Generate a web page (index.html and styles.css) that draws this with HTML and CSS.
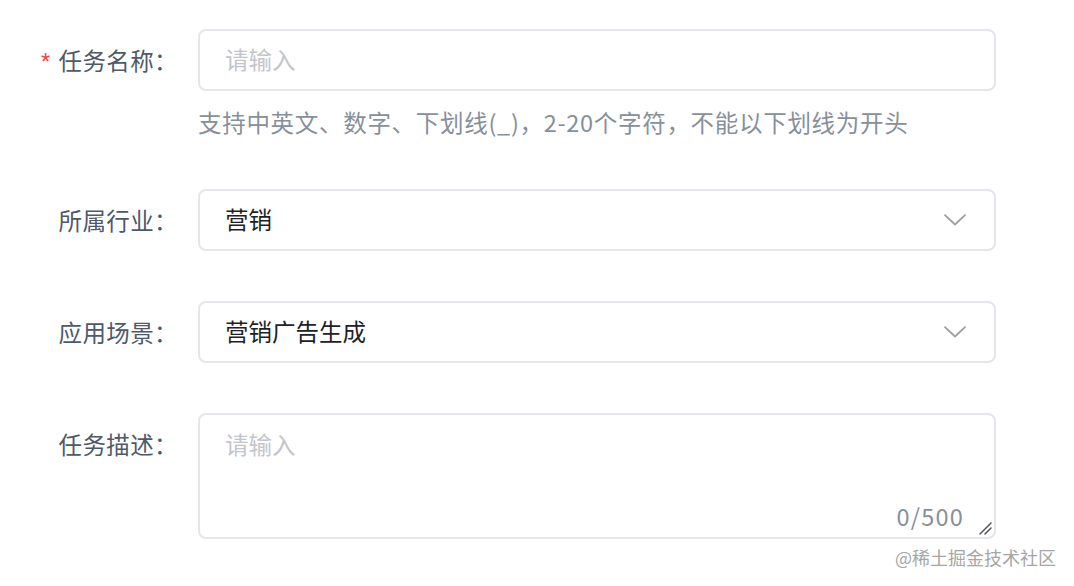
FILE: index.html
```html
<!DOCTYPE html>
<html lang="zh-CN">
<head>
<meta charset="utf-8">
<title>任务表单</title>
<link rel="stylesheet" href="styles.css">
</head>
<body>
<form class="form">
  <div class="item">
    <label class="label"><span class="req">*</span>任务名称：</label>
    <div class="control">
      <div class="input"><span class="placeholder">请输入</span></div>
      <div class="help">支持中英文、数字、下划线(_)，2-20个字符，不能以下划线为开头</div>
    </div>
  </div>
  <div class="item">
    <label class="label">所属行业：</label>
    <div class="control">
      <div class="input select"><span class="value">营销</span>
        <svg class="arrow" width="22" height="12" viewBox="0 0 22 12"><path d="M1 1.2 L11 10.5 L21 1.2" fill="none" stroke="#9a9ea6" stroke-width="1.8" stroke-linecap="round" stroke-linejoin="round"/></svg>
      </div>
    </div>
  </div>
  <div class="item">
    <label class="label">应用场景：</label>
    <div class="control">
      <div class="input select"><span class="value">营销广告生成</span>
        <svg class="arrow" width="22" height="12" viewBox="0 0 22 12"><path d="M1 1.2 L11 10.5 L21 1.2" fill="none" stroke="#9a9ea6" stroke-width="1.8" stroke-linecap="round" stroke-linejoin="round"/></svg>
      </div>
    </div>
  </div>
  <div class="item">
    <label class="label">任务描述：</label>
    <div class="control">
      <div class="textarea">
        <span class="placeholder">请输入</span>
        <span class="counter">0/500</span>
        <svg class="resize" width="14" height="14" viewBox="0 0 14 14"><path d="M2 13 L13 2 M7 13 L13 7" stroke="#555" stroke-width="1.5" stroke-linecap="round"/></svg>
      </div>
    </div>
  </div>
</form>
<div class="watermark">@稀土掘金技术社区</div>
</body>
</html>
```
FILE: styles.css
```css
html, body {
  margin: 0;
  padding: 0;
  background: #ffffff;
}
body {
  font-family: "Noto Sans CJK SC", "Noto Sans", sans-serif;
  font-size: 23.5px;
  width: 1074px;
  height: 586px;
  overflow: hidden;
  position: relative;
}
.form {
  padding-top: 29px;
  display: flex;
  flex-direction: column;
  gap: 50px;
  width: 996px;
}
.item {
  display: flex;
  align-items: flex-start;
}
.label {
  flex: 0 0 198px;
  box-sizing: border-box;
  padding-right: 20px;
  text-align: right;
  line-height: 62px;
  height: 62px;
  color: #4e5969;
  white-space: nowrap;
  letter-spacing: 0.4px;
}
.req {
  color: #f53f3f;
  margin-right: 8px;
  font-family: "Liberation Sans", sans-serif;
}
.control {
  flex: 1;
  display: flex;
  flex-direction: column;
}
.input {
  box-sizing: border-box;
  height: 62px;
  border: 2px solid #e5e6eb;
  border-radius: 8px;
  padding: 0 25px;
  display: flex;
  align-items: center;
  line-height: 1;
}
.select {
  justify-content: space-between;
  padding-right: 28px;
}
.placeholder {
  color: #c2c5cb;
}
.value {
  color: #1d2129;
}
.arrow {
  display: block;
}
.help {
  margin-top: 14px;
  line-height: 34px;
  color: #86909c;
  white-space: nowrap;
  letter-spacing: 0.7px;
}
.textarea {
  box-sizing: border-box;
  height: 126px;
  border: 2px solid #e5e6eb;
  border-radius: 8px;
  padding: 12px 25px;
  position: relative;
  line-height: 34px;
}
.counter {
  position: absolute;
  right: 30px;
  bottom: 4px;
  color: #86909c;
  line-height: 34px;
  letter-spacing: 1.2px;
}
.resize {
  position: absolute;
  right: 2px;
  bottom: 2px;
}
.watermark {
  position: absolute;
  left: 895px;
  top: 543px;
  font-size: 18px;
  line-height: 28px;
  color: #a6a6a6;
  white-space: nowrap;
}
```
